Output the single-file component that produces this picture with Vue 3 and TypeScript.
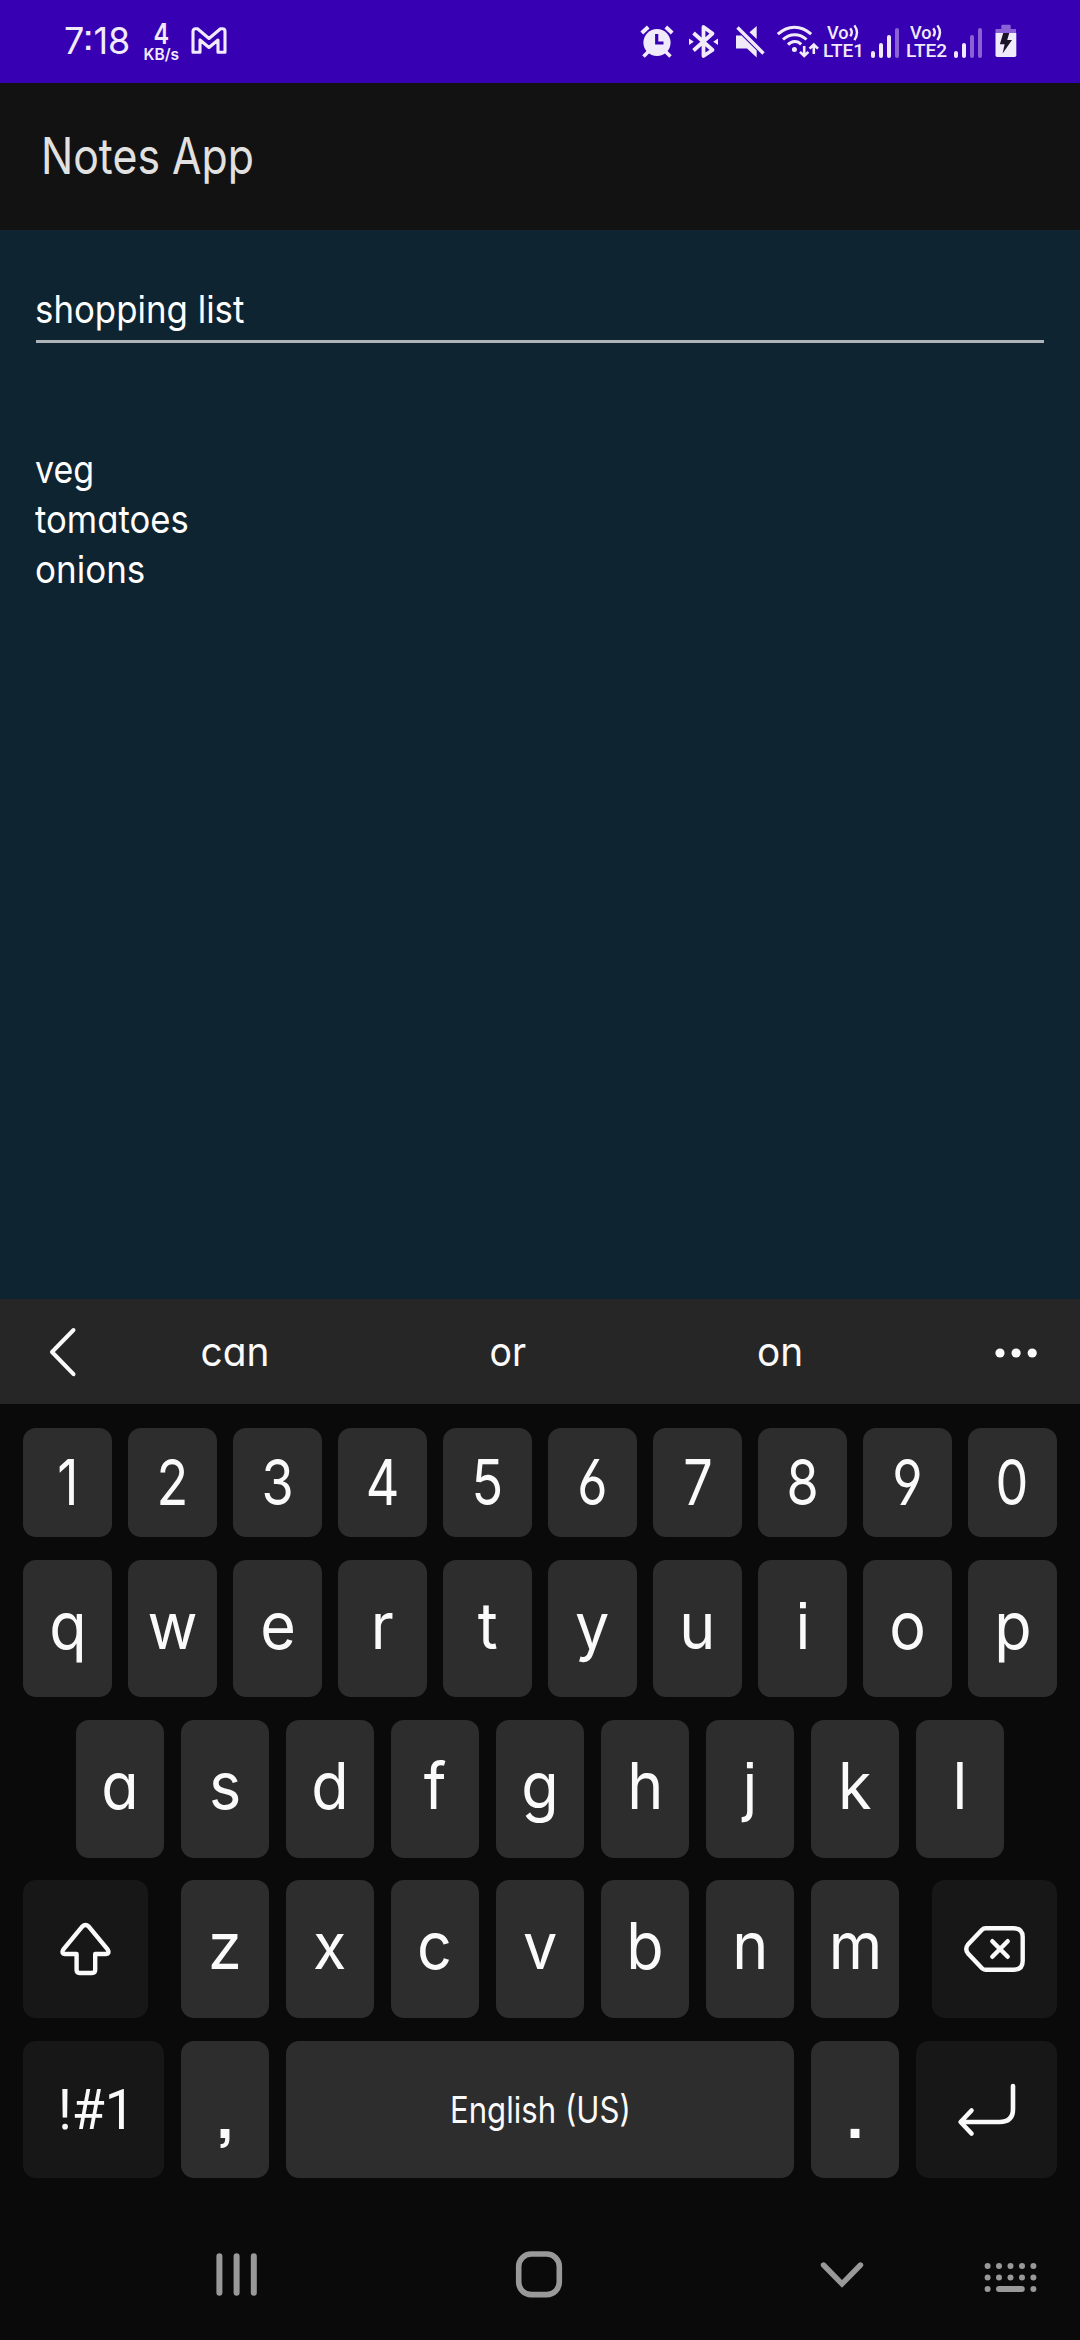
<script setup lang="ts">
import type { Directive } from 'vue'

interface Key {
  id: string
  label?: string
  kind?: 'fn' | 'space' | 'punct' | 'digit'
  width: number
}

interface Row {
  id: string
  className: string
  keys: Key[]
}

// Condenses a label horizontally so that it takes the given number of pixels.
const vFit: Directive<HTMLElement, number> = {
  mounted(el, { value }) {
    el.style.transform = `scaleX(${value / el.offsetWidth})`
  },
}

const chars = (text: string, width: number, kind?: Key['kind']): Key[] =>
  text.split('').map((c) => ({ id: c, label: c, width, kind }))

const rows: Row[] = [
  { id: 'digits', className: 'row-digits', keys: chars('1234567890', 89, 'digit') },
  { id: 'top', className: 'row-top', keys: chars('qwertyuiop', 89) },
  { id: 'home', className: 'row-home', keys: chars('asdfghjkl', 88) },
  {
    id: 'bottom',
    className: 'row-bottom',
    keys: [{ id: 'shift', kind: 'fn', width: 125 }, ...chars('zxcvbnm', 88), { id: 'back', kind: 'fn', width: 125 }],
  },
  {
    id: 'space',
    className: 'row-space',
    keys: [
      { id: 'sym', kind: 'fn', width: 141 },
      { id: ',', label: ',', kind: 'punct', width: 88 },
      { id: 'spacebar', kind: 'space', width: 508 },
      { id: '.', label: '.', kind: 'punct', width: 88 },
      { id: 'enter', kind: 'fn', width: 141 },
    ],
  },
]

const noteLines = [
  { text: 'veg', width: 59 },
  { text: 'tomatoes', width: 154 },
  { text: 'onions', width: 110 },
]

const sims = [
  { id: 'LTE1', level: 3 },
  { id: 'LTE2', level: 2 },
]
const barHeights = [7, 15, 23, 30]
</script>

<template>
  <div class="screen">
    <header class="status">
      <div class="status-left">
        <span v-fit="66" class="clock">7:18</span>
        <div class="speed">
          <span class="speed-value">4</span>
          <span class="speed-unit">KB/s</span>
        </div>
        <svg class="gmail" viewBox="0 0 36 28" width="36" height="28">
          <path
            d="M4.5 1.8H6.5L18 11.5L29.5 1.8H31.5C33 1.8 34 3 34 4.5V25.2H27V13L18 20.5L9 13V25.2H2V4.5C2 3 3 1.8 4.5 1.8Z"
            fill="none" stroke="currentColor" stroke-width="3.1" stroke-linejoin="round"
          />
        </svg>
      </div>
      <div class="status-right">
        <svg viewBox="640 24 47 36" width="47" height="36">
          <circle cx="657" cy="42.5" r="13.6" fill="currentColor" />
          <path d="M641.8 33L648.2 27M665.8 27L672.2 33" stroke="currentColor" stroke-width="4" />
          <path d="M648.5 51.5L643.5 56.5M665.5 51.5L670.5 56.5" stroke="currentColor" stroke-width="3.6" />
          <path d="M656.7 34V43H663.5" fill="none" stroke="#3700b3" stroke-width="3.2" />
        </svg>
        <svg viewBox="687 24 47 36" width="47" height="36">
          <path d="M693.5 33L712.5 50L703.5 56V27L712.5 33.5L693.5 50.5" fill="none" stroke="currentColor" stroke-width="3.8" stroke-linejoin="round" />
          <path d="M689 38.5L693.8 41.8L689 45ZM718 38.5L713.2 41.8L718 45Z" fill="currentColor" />
        </svg>
        <svg viewBox="734 24 42 36" width="42" height="36">
          <path d="M736 35.5H741.5L756.7 50.5V57.5L747 48.5H736Z" fill="currentColor" />
          <path d="M756.7 26V39L749.5 32.2Z" fill="currentColor" />
          <path d="M737.5 27.5L763.5 53.5" stroke="currentColor" stroke-width="3.4" />
        </svg>
        <svg viewBox="776 24 47 36" width="47" height="36">
          <g fill="none" stroke="currentColor" stroke-width="3">
            <path d="M777.8 34.2C788 24.8 801 24.8 811.2 34.2" />
            <path d="M783 39.5C790 33 799.5 33 806.5 39.5" />
            <path d="M788 44.6C792 40.5 797.5 40.5 801.2 44.4" />
            <path d="M804.2 46V56M800 51.8L804.2 56L808.4 51.8M813.8 54V44.5M809.6 48.7L813.8 44.5L818 48.7" stroke-width="2.6" />
          </g>
          <circle cx="794.4" cy="49.5" r="2.5" fill="currentColor" />
        </svg>
        <div v-for="sim in sims" :key="sim.id" class="sim">
          <div class="volte">
            <span class="vo">
              <span v-fit="21.5" class="vo-text">Vo</span>
              <svg viewBox="0 0 11 18" width="11" height="18">
                <path d="M1.2 4.2Q4.4 8.2 1.2 12.2M5.4 1.4Q10.6 8.4 5.4 16.2" fill="none" stroke="currentColor" stroke-width="2.4" />
              </svg>
            </span>
            <span v-fit="41" class="lte">{{ sim.id }}</span>
          </div>
          <div class="bars">
            <i v-for="(h, i) in barHeights" :key="h" :class="{ dim: i >= sim.level }" :style="{ height: h + 'px' }"></i>
          </div>
        </div>
        <svg class="battery" viewBox="0 0 22 34" width="22" height="34">
          <path d="M6.3 1.8Q6.3 .8 7.3 .8H14.7Q15.7 .8 15.7 1.8V5H21V9H.5V5H6.3Z" fill="#8a62d6" />
          <path d="M.5 9H21.3V31.3Q21.3 33 19.6 33H2.2Q.5 33 .5 31.3Z" fill="currentColor" />
          <path d="M8.2 9H14.3L12.2 16H17L7.6 29.5L9.6 20.2H4.9Z" fill="#1b1428" />
        </svg>
      </div>
    </header>

    <div class="app-bar"><h1 v-fit="213">Notes App</h1></div>

    <main class="note">
      <div class="note-title"><span v-fit="209">shopping list</span></div>
      <div class="note-body">
        <div v-for="line in noteLines" :key="line.text"><span v-fit="line.width">{{ line.text }}</span></div>
      </div>
    </main>

    <div class="suggest">
      <svg viewBox="0 0 30 52" width="30" height="52">
        <path d="M25.5 4L4 26L25.5 48.2" fill="none" stroke="currentColor" stroke-width="4" stroke-linecap="round" stroke-linejoin="round" />
      </svg>
      <div class="word first"><span v-fit="69">can</span></div>
      <div class="word"><span v-fit="37">or</span></div>
      <div class="word"><span v-fit="46">on</span></div>
      <svg class="more" viewBox="0 0 44 12" width="44" height="12">
        <circle cx="6" cy="6" r="4.6" fill="currentColor" />
        <circle cx="22.1" cy="6" r="4.6" fill="currentColor" />
        <circle cx="38.2" cy="6" r="4.6" fill="currentColor" />
      </svg>
    </div>

    <section class="keyboard">
      <div v-for="row in rows" :key="row.id" class="row" :class="row.className">
        <div
          v-for="key in row.keys" :key="key.id"
          class="key" :class="key.kind" :style="{ width: key.width + 'px' }"
        >
          <svg v-if="key.id === 'shift'" viewBox="58 1920 55 58" width="55" height="58">
            <path
              d="M82.2 1926.6Q85.5 1923.4 88.8 1926.6L107.6 1949.4Q110.2 1953.5 105.8 1954H95.2V1969.8Q95.2 1973 92 1973H79.5Q76.6 1973 76.6 1969.8V1954H65.2Q60.8 1953.5 63.4 1949.4Z"
              fill="none" stroke="currentColor" stroke-width="4.4" stroke-linejoin="round"
            />
          </svg>
          <svg v-else-if="key.id === 'back'" viewBox="962 1924 65 50" width="65" height="50">
            <path
              d="M985.5 1928.3H1013.5C1019.5 1928.3 1022.7 1931.5 1022.7 1937V1961C1022.7 1966.5 1019.5 1969.7 1013.5 1969.7H985.5Q983.5 1969.7 982 1968.2L968 1953.5Q964.5 1949 968 1944.5L982 1929.8Q983.5 1928.3 985.5 1928.3Z"
              fill="none" stroke="currentColor" stroke-width="4.4"
            />
            <path d="M992.3 1941.2L1007.7 1956.8M1007.7 1941.2L992.3 1956.8" stroke="currentColor" stroke-width="4.4" stroke-linecap="round" />
          </svg>
          <svg v-else-if="key.id === 'enter'" class="enter" viewBox="956 2081 62 58" width="62" height="58">
            <path
              d="M1013 2086V2109Q1013 2122 999.5 2122H961M971.5 2110.5L960.6 2122L971.5 2133.5"
              fill="none" stroke="currentColor" stroke-width="4.6" stroke-linecap="round" stroke-linejoin="round"
            />
          </svg>
          <span v-else-if="key.id === 'sym'" v-fit="77" class="sym">!#1</span>
          <span v-else-if="key.id === 'spacebar'" v-fit="181" class="lang">English (US)</span>
          <span v-else class="glyph">{{ key.label }}</span>
        </div>
      </div>
    </section>

    <nav class="nav">
      <svg class="recents" viewBox="0 0 44 46" width="44" height="46">
        <path d="M4.4 4.2V40.8M21.6 4.2V40.8M38.8 4.2V40.8" stroke="currentColor" stroke-width="6" stroke-linecap="round" />
      </svg>
      <svg class="home" viewBox="0 0 48 48" width="48" height="48">
        <rect x="3.7" y="4" width="40.6" height="40.6" rx="12.5" fill="none" stroke="currentColor" stroke-width="5.6" />
      </svg>
      <svg class="hide" viewBox="0 0 46 30" width="46" height="30">
        <path d="M4.5 5L23 23.8L41.5 5" fill="none" stroke="currentColor" stroke-width="5.4" stroke-linecap="round" />
      </svg>
      <svg class="switch" viewBox="983 2262 54 32" width="54" height="32">
        <template v-for="x in [986.6, 998, 1009.5, 1021, 1032.4]" :key="x">
          <circle :cx="x" cy="2266" r="3" fill="currentColor" />
          <circle :cx="x" cy="2277.4" r="3" fill="currentColor" />
        </template>
        <circle cx="986.6" cy="2289" r="3" fill="currentColor" />
        <circle cx="1032.4" cy="2289" r="3" fill="currentColor" />
        <path d="M998 2289H1020.8" stroke="currentColor" stroke-width="6" stroke-linecap="round" />
      </svg>
    </nav>
  </div>
</template>

<style>
body {
  margin: 0;
  background: #0a0a0a;
}
</style>

<style scoped>
.screen {
  width: 1080px;
  height: 2340px;
  overflow: hidden;
  display: flex;
  flex-direction: column;
  background: #0a0a0a;
  color: #fafafa;
  font-family: Inter, "Open Sans", sans-serif;
  font-feature-settings: "cv11", "cv03", "cv04", "ss07";
}
.screen > * {
  box-sizing: border-box;
  flex: none;
}
svg {
  display: block;
  flex: none;
}
span {
  display: inline-block;
  white-space: nowrap;
}

.status {
  height: 83px;
  background: #3700b3;
  color: #f1eafb;
  display: flex;
  justify-content: space-between;
}
.status-left {
  display: flex;
  padding-left: 64px;
}
.clock {
  width: max-content;
  font-size: 37px;
  line-height: 81px;
  transform-origin: left;
  margin-right: 9px;
}
.speed {
  width: 40px;
  display: flex;
  flex-direction: column;
  align-items: center;
  font-weight: 600;
  padding-top: 20px;
}
.speed-value {
  font-size: 28px;
  line-height: 28px;
  transform: scaleX(0.84);
}
.speed-unit {
  font-size: 15.5px;
  line-height: 13px;
}
.gmail {
  margin: 27px 0 0 10px;
}
.status-right {
  display: flex;
  padding: 24px 63px 0 0;
}
.sim {
  display: flex;
  width: 83px;
}
.volte {
  width: 48px;
  font-family: Roboto, sans-serif;
  font-weight: 500;
}
.vo {
  display: flex;
  height: 18px;
  padding-left: 4px;
}
.vo-text {
  font-size: 18.5px;
  line-height: 18px;
  width: 22px;
  transform-origin: left;
}
.lte {
  display: block;
  width: max-content;
  font-size: 19px;
  line-height: 18px;
  transform-origin: left;
}
.bars {
  display: flex;
  align-items: flex-end;
  gap: 4px;
  height: 33.5px;
}
.bars i {
  width: 4px;
  border-radius: 2px;
  background: #f1eafb;
}
.bars .dim {
  background: #8a62d6;
}
.battery {
  margin-left: 6px;
}

.app-bar {
  height: 147px;
  background: #121212;
  padding-left: 41px;
}
.app-bar h1 {
  margin: 0;
  width: max-content;
  font-size: 50px;
  font-weight: 400;
  line-height: 147px;
  color: #e1e1e1;
  transform-origin: left;
}

.note {
  height: 1069px;
  background: #0f2431;
  color: #fff;
  font-size: 38.5px;
  line-height: 50px;
}
.note span {
  transform-origin: left;
}
.note-title {
  margin: 0 36px;
  padding: 54px 0 6px;
  border-bottom: 3px solid #adb5ba;
}
.note-title span,
.note-body span {
  margin-left: -1px;
}
.note-body {
  padding: 101px 36px 0;
}
.note-body div,
.note-title span {
  display: block;
  width: max-content;
}

.suggest {
  height: 105px;
  background: #262626;
  display: flex;
  align-items: center;
  padding-left: 48px;
}
.word {
  width: 273px;
  display: flex;
  justify-content: center;
  font-size: 40.5px;
  line-height: 105px;
}
.word.first {
  margin-left: 20px;
}
.more {
  margin-left: 77px;
  margin-top: 3px;
}

.keyboard {
  padding-top: 24px;
  height: 750px;
}
.row {
  display: flex;
  justify-content: center;
  height: 137px;
}
.row-digits {
  height: 109px;
  gap: 16px;
  margin-bottom: 23px;
}
.row-top {
  gap: 16px;
  margin-bottom: 23px;
}
.row-home {
  height: 138px;
  gap: 17px;
  margin-bottom: 22px;
}
.row-bottom {
  height: 138px;
  gap: 17px;
  margin-bottom: 23px;
}
.row-space {
  gap: 17px;
}
.key {
  display: flex;
  justify-content: center;
  align-items: flex-start;
  border-radius: 13px;
  background: #2d2d2d;
}
.key.fn {
  background: #171717;
  align-items: center;
}
.row-bottom .fn:first-child {
  margin-right: 16px;
}
.row-bottom .fn:last-child {
  margin-left: 16px;
}
.glyph {
  font-size: 65px;
  line-height: 131px;
  transform: scaleX(0.94);
}
.digit .glyph {
  font-size: 63.5px;
  line-height: 108px;
  transform: scaleX(0.82);
}
.punct .glyph {
  font-size: 72px;
  font-weight: 550;
  line-height: 142px;
}
.sym {
  font-family: Roboto, sans-serif;
  font-size: 55px;
  line-height: 138px;
  margin-left: 6px;
}
.lang {
  font-size: 37px;
  line-height: 137px;
}
.key .enter {
  margin-top: 1px;
}

.nav {
  height: 186px;
  display: flex;
  align-items: flex-start;
  color: #999;
}
.recents {
  margin: 98px 0 0 215px;
}
.home {
  margin: 96px 0 0 256px;
}
.hide {
  margin: 106px 0 0 256px;
}
.switch {
  margin: 108px 0 0 119px;
}
</style>
